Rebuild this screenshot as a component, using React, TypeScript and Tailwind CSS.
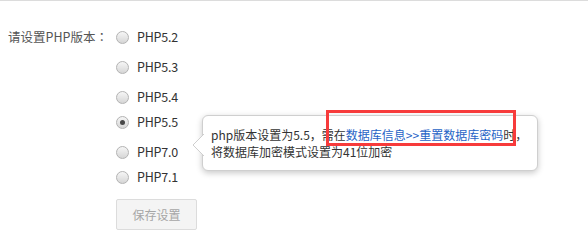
import React from "react";

const versions = ["PHP5.2", "PHP5.3", "PHP5.4", "PHP5.5", "PHP7.0", "PHP7.1"];
const gaps = ["mt-0", "mt-[10px]", "mt-[10px]", "mt-[5px]", "mt-[10px]", "mt-[5px]"];

function Radio({ checked }: { checked: boolean }) {
  return (
    <span className="flex h-[13px] w-[13px] items-center justify-center rounded-full border border-[#b3b3b3] bg-gradient-to-b from-[#f6f6f6] to-[#d6d6d6]">
      {checked && <span className="h-[5px] w-[5px] rounded-full bg-[#474747]" />}
    </span>
  );
}

export default function App() {
  return (
    <div
      className="relative h-[247px] w-[588px] overflow-hidden border-t border-[#dcdcdc] bg-white"
      style={{ fontFamily: '"Noto Sans CJK SC", "Noto Sans", sans-serif' }}
    >
      <div className="flex pt-[26px]">
        <div className="h-5 w-[116px] pl-2 text-[12.5px] leading-5 text-[#555]">
          请设置PHP版本<span style={{ fontFamily: '"Noto Sans CJK TC", sans-serif' }}>：</span>
        </div>
        <div className="flex flex-col">
          {versions.map((v, i) => (
            <label key={v} className={`flex h-5 items-center gap-2 ${gaps[i]}`}>
              <Radio checked={v === "PHP5.5"} />
              <span className="text-[12.5px] leading-5 tracking-[-0.2px] text-[#333]">{v}</span>
            </label>
          ))}
          <button className="mt-[12px] h-[31px] w-[81px] rounded-[2px] border border-[#dcdcdc] bg-[#f4f4f4] text-[12px] text-[#a6a6a6]">
            保存设置
          </button>
        </div>
      </div>

      {/* tooltip */}
      <div className="absolute left-[202px] top-[114px] w-[336px] rounded-[6px] border border-[#cfcfcf] bg-white px-2 py-[10px] text-[12px] leading-[17px] text-[#333] shadow-[0_2px_6px_rgba(0,0,0,0.22)]">
        <div>
          php版本设置为5.5，需在<span className="text-[#1f63c6]">数据库信息&gt;&gt;重置数据库密码</span>时，
        </div>
        <div>将数据库加密模式设置为41位加密</div>
        <svg className="absolute left-[-11px] top-[18px]" width="12" height="22" viewBox="0 0 12 22">
          <path d="M12 0 L1 11 L12 22" fill="white" stroke="#cfcfcf" strokeWidth="1" />
        </svg>
      </div>

      {/* annotation box */}
      <div className="absolute left-[326px] top-[109px] h-[36px] w-[190px] border-[3px] border-[#f73b3b]" />
    </div>
  );
}
